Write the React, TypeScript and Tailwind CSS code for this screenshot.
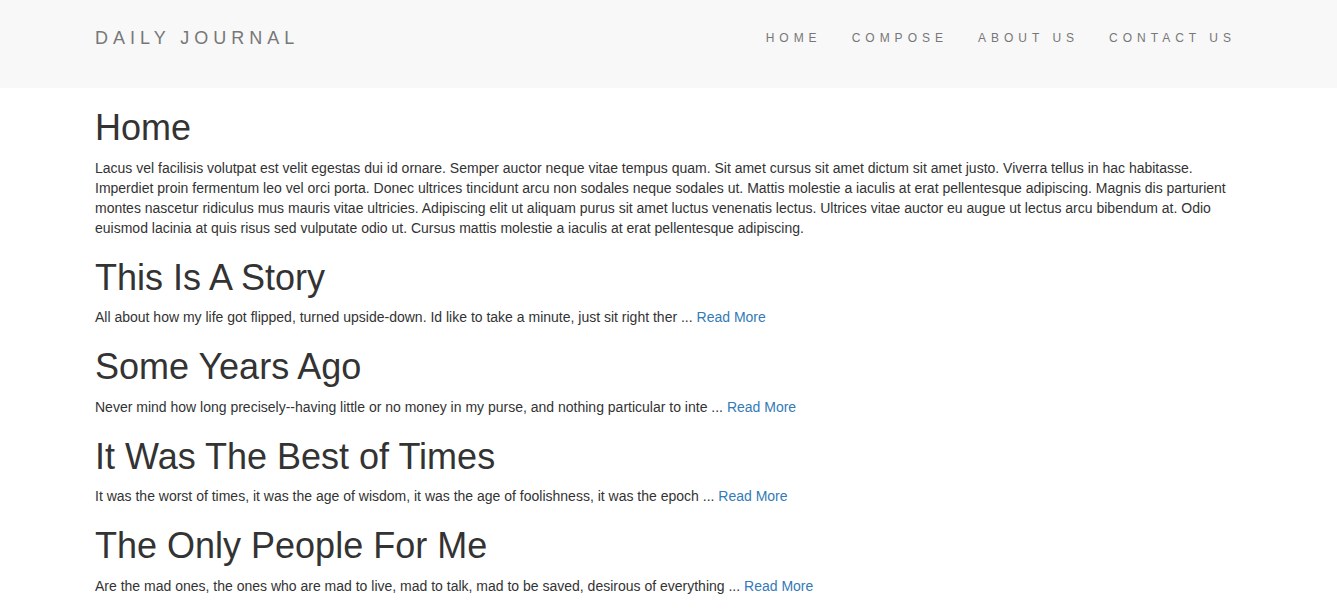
import React from "react";

const posts = [
  {
    title: "This Is A Story",
    body: "All about how my life got flipped, turned upside-down. Id like to take a minute, just sit right ther",
  },
  {
    title: "Some Years Ago",
    body: "Never mind how long precisely--having little or no money in my purse, and nothing particular to inte",
  },
  {
    title: "It Was The Best of Times",
    body: "It was the worst of times, it was the age of wisdom, it was the age of foolishness, it was the epoch",
  },
  {
    title: "The Only People For Me",
    body: "Are the mad ones, the ones who are mad to live, mad to talk, mad to be saved, desirous of everything",
  },
];

export default function App() {
  return (
    <div
      className="min-h-screen bg-white text-[#333] text-[14px] leading-[20px]"
      style={{ fontFamily: '"Liberation Sans", Arial, Helvetica, sans-serif' }}
    >
      <nav className="h-[88px] bg-[#f8f8f8]">
        <div className="flex h-[76px] items-center justify-between pl-[95px] pr-[86px]">
          <a className="text-[18px] leading-[20px] tracking-[5px] text-[#777]">DAILY JOURNAL</a>
          <ul className="flex items-center">
            {["HOME", "COMPOSE", "ABOUT US", "CONTACT US"].map((item) => (
              <li key={item}>
                <a className="block px-[15px] text-[12px] leading-[20px] tracking-[5px] text-[#777]">
                  {item}
                </a>
              </li>
            ))}
          </ul>
        </div>
      </nav>
      <main className="ml-[95px] w-[1142px]">
        <h1 className="mt-[20px] mb-[10px] text-[36px] leading-[39.6px] font-normal">Home</h1>
        <p>
          Lacus vel facilisis volutpat est velit egestas dui id ornare. Semper auctor neque vitae tempus quam. Sit amet
          cursus sit amet dictum sit amet justo. Viverra tellus in hac habitasse. Imperdiet proin fermentum leo vel orci
          porta. Donec ultrices tincidunt arcu non sodales neque sodales ut. Mattis molestie a iaculis at erat
          pellentesque adipiscing. Magnis dis parturient montes nascetur ridiculus mus mauris vitae ultricies. Adipiscing
          elit ut aliquam purus sit amet luctus venenatis lectus. Ultrices vitae auctor eu augue ut lectus arcu bibendum
          at. Odio euismod lacinia at quis risus sed vulputate odio ut. Cursus mattis molestie a iaculis at erat
          pellentesque adipiscing.
        </p>
        {posts.map((p) => (
          <section key={p.title}>
            <h1 className="mt-[20px] mb-[10px] text-[36px] leading-[39.6px] font-normal">{p.title}</h1>
            <p>
              {p.body} ... <a className="text-[#337ab7]">Read More</a>
            </p>
          </section>
        ))}
      </main>
    </div>
  );
}
